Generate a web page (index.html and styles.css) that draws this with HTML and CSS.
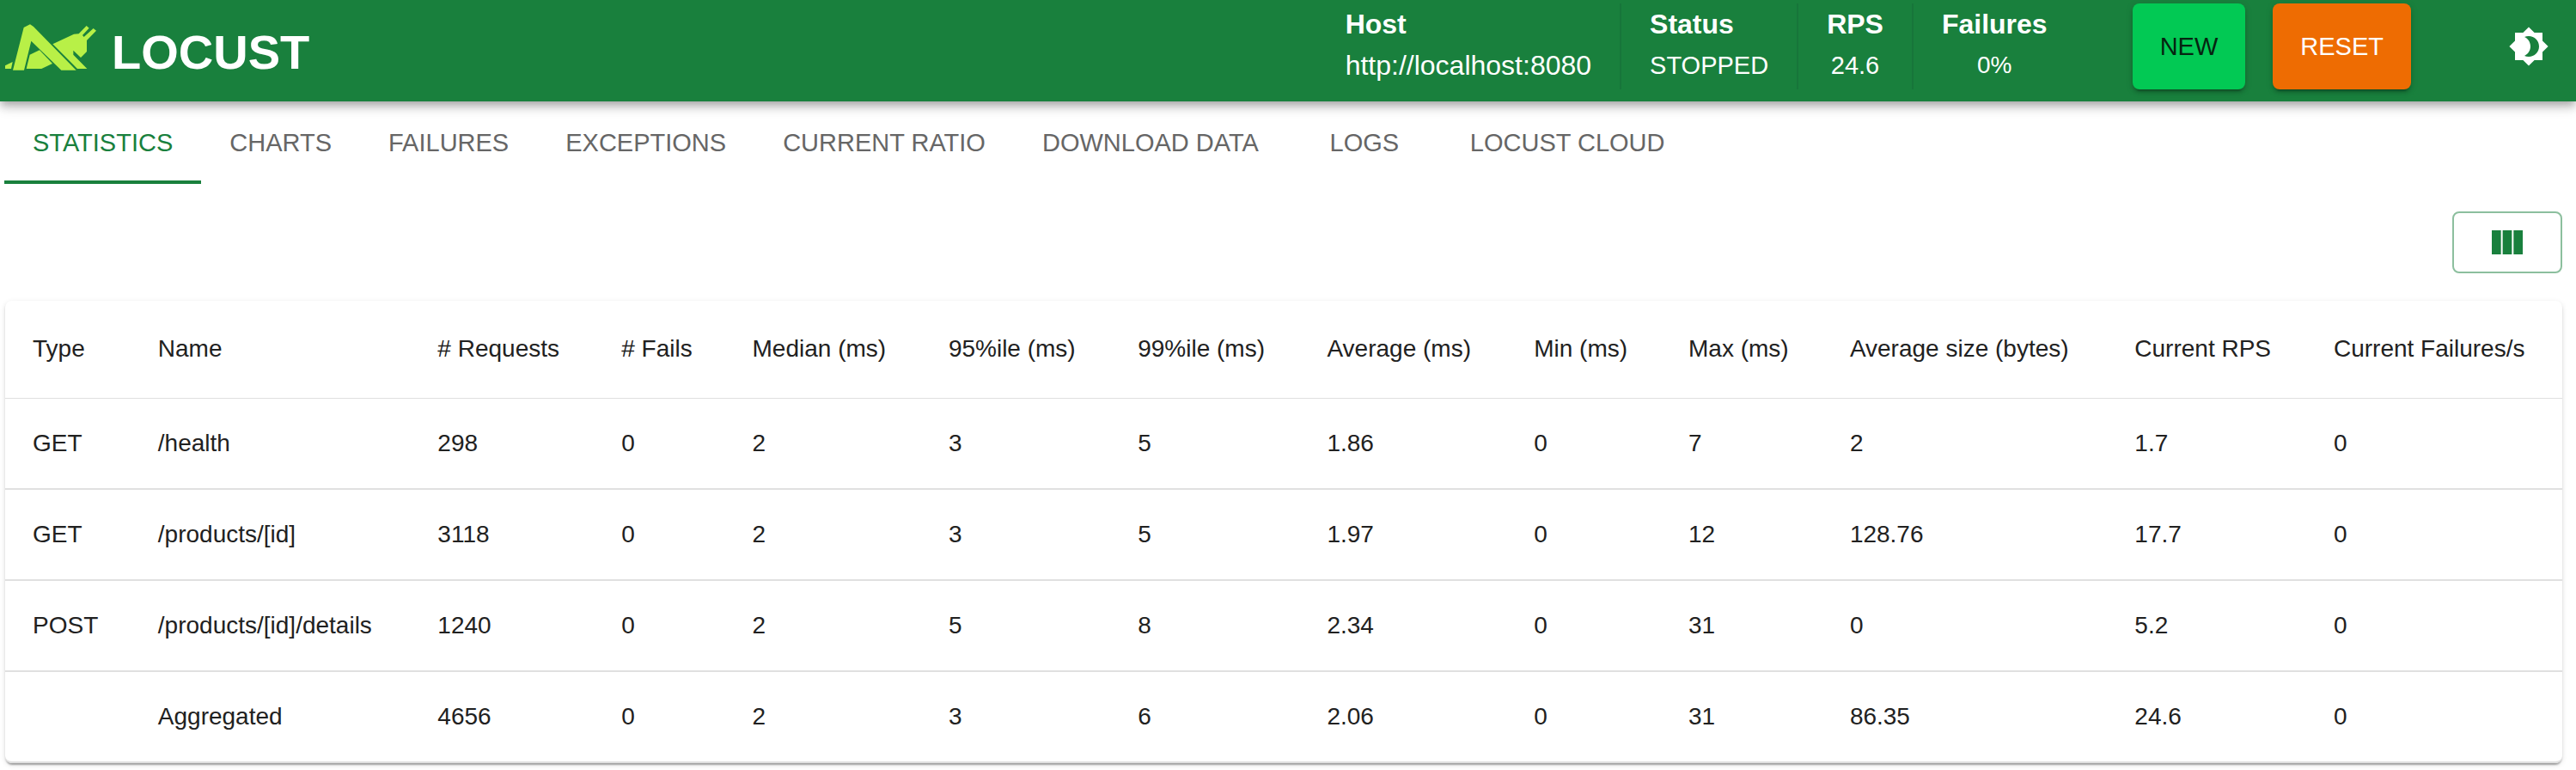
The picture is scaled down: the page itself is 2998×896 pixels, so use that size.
FILE: index.html
```html
<!DOCTYPE html>
<html lang="en">
<head>
<meta charset="utf-8">
<meta name="viewport" content="width=device-width, initial-scale=1">
<title>Locust</title>
<link rel="stylesheet" href="styles.css">
</head>
<body>
<header class="navbar">
  <a class="brand" href="#">
    <svg class="brand-mark" viewBox="0 0 318 160" aria-hidden="true">
      <path d="M0 144 L26 131 L21 155 L0 155Z"/>
      <path d="M27 160 L65 11 L87 0 L99 8 L248 160 L196 160 L91 58 L66 160Z"/>
      <path d="M74 155 L86 106 L120 90 L165 137 L127 155Z"/>
      <path d="M166 69 L240 34 L257 33 L284 5 L293 13 L270 38 L275 44 L308 14 L318 22 L285 56 L285 95 L264 116 L238 91 L238 106 L286 155 L252 155Z"/>
    </svg>
    <span class="brand-name">LOCUST</span>
  </a>
  <div class="status-bar">
    <dl class="metrics">
      <div class="metric metric-start"><dt>Host</dt><dd class="host">http://localhost:8080</dd></div>
      <div class="metric metric-start"><dt>Status</dt><dd class="caps">STOPPED</dd></div>
      <div class="metric"><dt>RPS</dt><dd class="caps">24.6</dd></div>
      <div class="metric"><dt>Failures</dt><dd>0%</dd></div>
    </dl>
    <div class="actions">
      <button class="button button-new" type="button">NEW</button>
      <button class="button button-reset" type="button">RESET</button>
    </div>
    <button class="theme-toggle" type="button" aria-label="Toggle theme">
      <svg class="icon" viewBox="0 0 24 24" aria-hidden="true"><path d="M20 8.69V4h-4.69L12 .69 8.69 4H4v4.69L.69 12 4 15.31V20h4.69L12 23.31 15.31 20H20v-4.69L23.31 12 20 8.69zM12 18c-.89 0-1.74-.2-2.5-.55C11.56 16.5 13 14.42 13 12s-1.44-4.5-3.5-5.45C10.26 6.2 11.11 6 12 6c3.31 0 6 2.69 6 6s-2.69 6-6 6z"/></svg>
    </button>
  </div>
</header>
<main class="content">
  <nav class="tabs" role="tablist">
    <button class="tab tab-active" type="button" role="tab" aria-selected="true">STATISTICS</button>
    <button class="tab" type="button" role="tab">CHARTS</button>
    <button class="tab" type="button" role="tab">FAILURES</button>
    <button class="tab" type="button" role="tab">EXCEPTIONS</button>
    <button class="tab" type="button" role="tab">CURRENT RATIO</button>
    <button class="tab" type="button" role="tab">DOWNLOAD DATA</button>
    <button class="tab" type="button" role="tab">LOGS</button>
    <button class="tab" type="button" role="tab">LOCUST CLOUD</button>
  </nav>
  <div class="panel">
    <button class="columns-button" type="button" aria-label="Select columns">
      <svg class="icon" viewBox="0 0 24 24" aria-hidden="true"><path d="M14.67 5v14H9.33V5h5.34zm1 14H21V5h-5.33v14zm-7.34 0V5H3v14h5.33z"/></svg>
    </button>
    <div class="paper">
      <table class="stats">
        <thead>
          <tr><th>Type</th><th>Name</th><th># Requests</th><th># Fails</th><th>Median (ms)</th><th>95%ile (ms)</th><th>99%ile (ms)</th><th>Average (ms)</th><th>Min (ms)</th><th>Max (ms)</th><th>Average size (bytes)</th><th>Current RPS</th><th>Current Failures/s</th></tr>
        </thead>
        <tbody>
          <tr><td>GET</td><td>/health</td><td>298</td><td>0</td><td>2</td><td>3</td><td>5</td><td>1.86</td><td>0</td><td>7</td><td>2</td><td>1.7</td><td>0</td></tr>
          <tr><td>GET</td><td>/products/[id]</td><td>3118</td><td>0</td><td>2</td><td>3</td><td>5</td><td>1.97</td><td>0</td><td>12</td><td>128.76</td><td>17.7</td><td>0</td></tr>
          <tr><td>POST</td><td>/products/[id]/details</td><td>1240</td><td>0</td><td>2</td><td>5</td><td>8</td><td>2.34</td><td>0</td><td>31</td><td>0</td><td>5.2</td><td>0</td></tr>
          <tr><td></td><td>Aggregated</td><td>4656</td><td>0</td><td>2</td><td>3</td><td>6</td><td>2.06</td><td>0</td><td>31</td><td>86.35</td><td>24.6</td><td>0</td></tr>
        </tbody>
      </table>
    </div>
  </div>
</main>
</body>
</html>
```
FILE: styles.css
```css
:root {
  --green: #19803d;
  --text: #212121;
  --muted: #666;
  --line: #e0e0e0;
}

* { box-sizing: border-box; }

body {
  margin: 0;
  background: #fff;
  color: var(--text);
  font-family: "Liberation Sans", Arial, sans-serif;
  font-size: 28px;
}

button {
  margin: 0;
  border: 0;
  background: none;
  font: inherit;
  cursor: pointer;
}

.icon {
  display: block;
  width: 48px;
  height: 48px;
  fill: currentColor;
}

/* Top bar */
.navbar {
  position: relative;
  display: flex;
  align-items: flex-start;
  justify-content: space-between;
  padding: 4px 15px 14px 6px;
  background: var(--green);
  color: #fff;
  box-shadow: 0 4px 8px -2px rgba(0, 0, 0, .2), 0 8px 10px 0 rgba(0, 0, 0, .14), 0 2px 20px 0 rgba(0, 0, 0, .12);
}

.brand {
  display: flex;
  align-items: center;
  gap: 18px;
  height: 100px;
  padding-top: 2px;
  color: inherit;
  text-decoration: none;
}

.brand-mark {
  width: 106px;
  height: 54px;
  fill: #b8f047;
}

.brand-name {
  padding-top: 12px;
  font-size: 56px;
  font-weight: 700;
  line-height: 60px;
}

.status-bar {
  display: flex;
  align-items: stretch;
}

.metrics {
  display: flex;
  margin: 0 66px 0 0;
}

.metric {
  padding: 0 33px 4px;
  border-right: 2px solid #17753a;
  text-align: center;
  line-height: 48px;
}

.metric:last-child { border-right: 0; }
.metric-start { text-align: left; }
.metric dt { font-size: 32px; font-weight: 700; }
.metric dd { margin: 0; }
.metric .host { font-size: 32px; }
.metric .caps { font-size: 29px; }

.actions {
  display: flex;
  gap: 32px;
  margin-right: 97px;
}

.button {
  padding: 0 32px;
  border-radius: 8px;
  font-size: 29px;
  box-shadow: 0 6px 2px -4px rgba(0, 0, 0, .2), 0 4px 4px 0 rgba(0, 0, 0, .14), 0 2px 10px 0 rgba(0, 0, 0, .12);
}

.button-new { background: #02c954; color: #062411; }
.button-reset { background: #ee6c02; color: #fff; }

.theme-toggle {
  align-self: center;
  padding: 16px;
  color: #fff;
}

/* Tabs */
.tabs {
  display: flex;
  padding-left: 5px;
}

.tab {
  min-width: 180px;
  height: 96px;
  padding: 0 33px;
  border-bottom: 4px solid transparent;
  border-top: 4px solid transparent;
  color: var(--muted);
  font-size: 29px;
  white-space: nowrap;
}

.tab-active {
  border-bottom-color: var(--green);
  color: var(--green);
}

/* Statistics panel */
.panel {
  display: flex;
  flex-direction: column;
  gap: 32px;
  padding: 32px 16px 8px 6px;
}

.columns-button {
  align-self: flex-end;
  padding: 10px 38px;
  border: 2px solid #8cbf9e;
  border-radius: 8px;
  color: var(--green);
}

.paper {
  border-radius: 8px;
  box-shadow: 0 4px 2px -2px rgba(0, 0, 0, .2), 0 2px 2px 0 rgba(0, 0, 0, .14), 0 2px 6px 0 rgba(0, 0, 0, .12);
}

.stats {
  width: 100%;
  border-spacing: 0;
  line-height: 40px;
}

.stats th,
.stats td {
  padding: 32px;
  border-bottom: 2px solid var(--line);
  font-weight: 400;
  text-align: left;
  white-space: nowrap;
}

.stats th {
  padding-bottom: 33px;
  border-bottom-width: 1px;
  line-height: 48px;
}

.stats tr:last-child td:first-child { border-bottom-left-radius: 8px; }
.stats tr:last-child td:last-child { border-bottom-right-radius: 8px; }
```
